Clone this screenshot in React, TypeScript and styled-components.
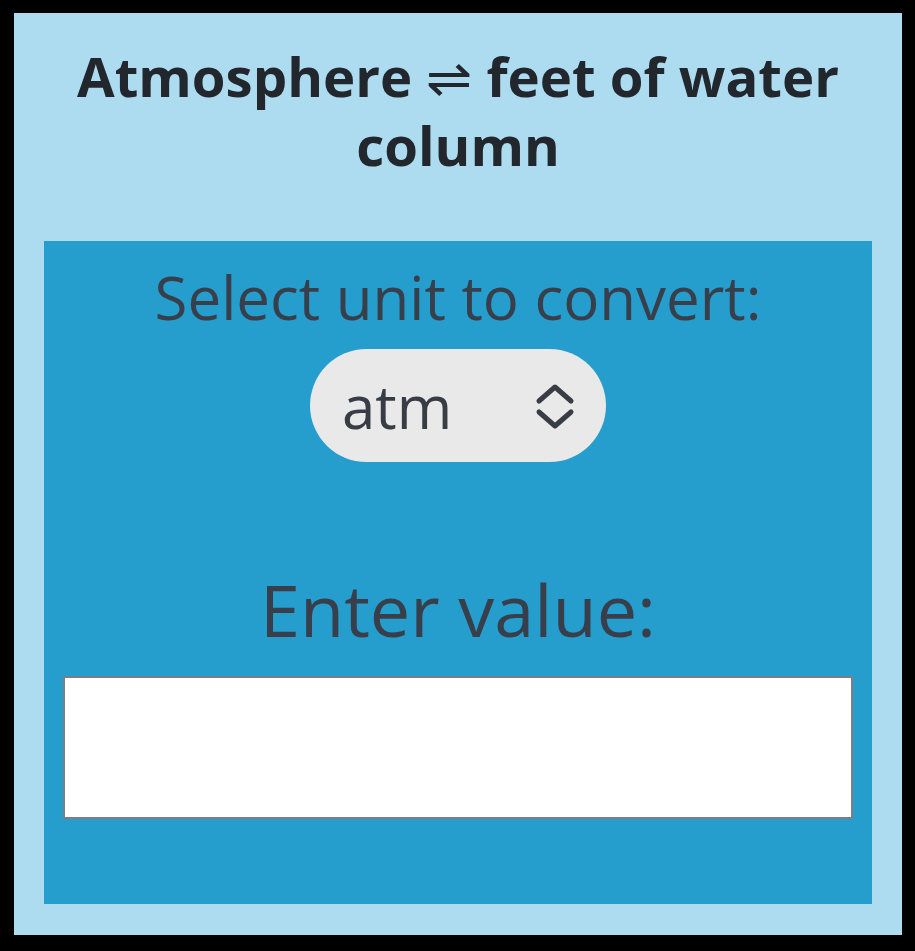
import { useState } from 'react';
import styled, { createGlobalStyle } from 'styled-components';

const GlobalStyle = createGlobalStyle`
  html, body {
    margin: 0;
    padding: 0;
    background: #000;
  }
  body {
    padding: 13px 13px 17px 14px;
    font-family: 'Open Sans', 'Noto Sans', sans-serif;
  }
`;

const Card = styled.main`
  background: #addcf0;
  padding: 30px 30px 31px;
  display: flex;
  flex-direction: column;
  align-items: stretch;
`;

const Title = styled.h1`
  margin: 0 0 62px;
  font-size: 54.5px;
  font-weight: 700;
  line-height: 67px;
  text-align: center;
  color: #22262d;
`;

const Arrows = styled.span`
  font-family: 'DejaVu Sans', sans-serif;
  font-weight: 200;
`;

const Panel = styled.section`
  background: #259dcd;
  padding: 20px 19px 85px;
  display: flex;
  flex-direction: column;
  align-items: center;
  color: #383f4b;
`;

const Label = styled.label<{ $size: number }>`
  display: block;
  font-size: ${(p) => p.$size}px;
  line-height: 1.2;
  text-align: center;
`;

const SelectWrap = styled.div`
  position: relative;
  margin: 16px 0 104px;
`;

const Select = styled.select`
  appearance: none;
  -webkit-appearance: none;
  display: block;
  width: 296px;
  height: 113px;
  border: none;
  border-radius: 57px;
  background: #e9e9ea;
  padding: 0 0 0 32px;
  font-family: 'Open Sans', 'Noto Sans', sans-serif;
  font-size: 60px;
  color: #383c44;
  outline: none;
`;

const Chevrons = styled.svg`
  position: absolute;
  right: 30px;
  top: 32px;
  pointer-events: none;
`;

const Input = styled.input`
  box-sizing: border-box;
  width: 100%;
  height: 143px;
  margin-top: 24px;
  border: 2px solid #7d7d86;
  background: #fff;
  font-family: 'Open Sans', 'Noto Sans', sans-serif;
  font-size: 48px;
  padding: 0 16px;
  outline: none;
`;

export default function App() {
  const [unit, setUnit] = useState('atm');
  const [value, setValue] = useState('');

  return (
    <>
      <GlobalStyle />
      <Card>
        <Title>
          Atmosphere <Arrows>⇌</Arrows> feet of water column
        </Title>
        <Panel>
          <Label $size={60} htmlFor="unit">Select unit to convert:</Label>
          <SelectWrap>
            <Select id="unit" value={unit} onChange={(e) => setUnit(e.target.value)}>
              <option value="atm">atm</option>
              <option value="ftH2O">ftH2O</option>
            </Select>
            <Chevrons width="44" height="52" viewBox="0 0 44 52" fill="none">
              <path d="M7 20 L23 6 L39 20" stroke="#383c44" strokeWidth="5" strokeLinecap="round" strokeLinejoin="round" />
              <path d="M7 31 L23 45 L39 31" stroke="#383c44" strokeWidth="5" strokeLinecap="round" strokeLinejoin="round" />
            </Chevrons>
          </SelectWrap>
          <Label $size={72} htmlFor="value">Enter value:</Label>
          <Input id="value" type="number" value={value} onChange={(e) => setValue(e.target.value)} />
        </Panel>
      </Card>
    </>
  );
}
